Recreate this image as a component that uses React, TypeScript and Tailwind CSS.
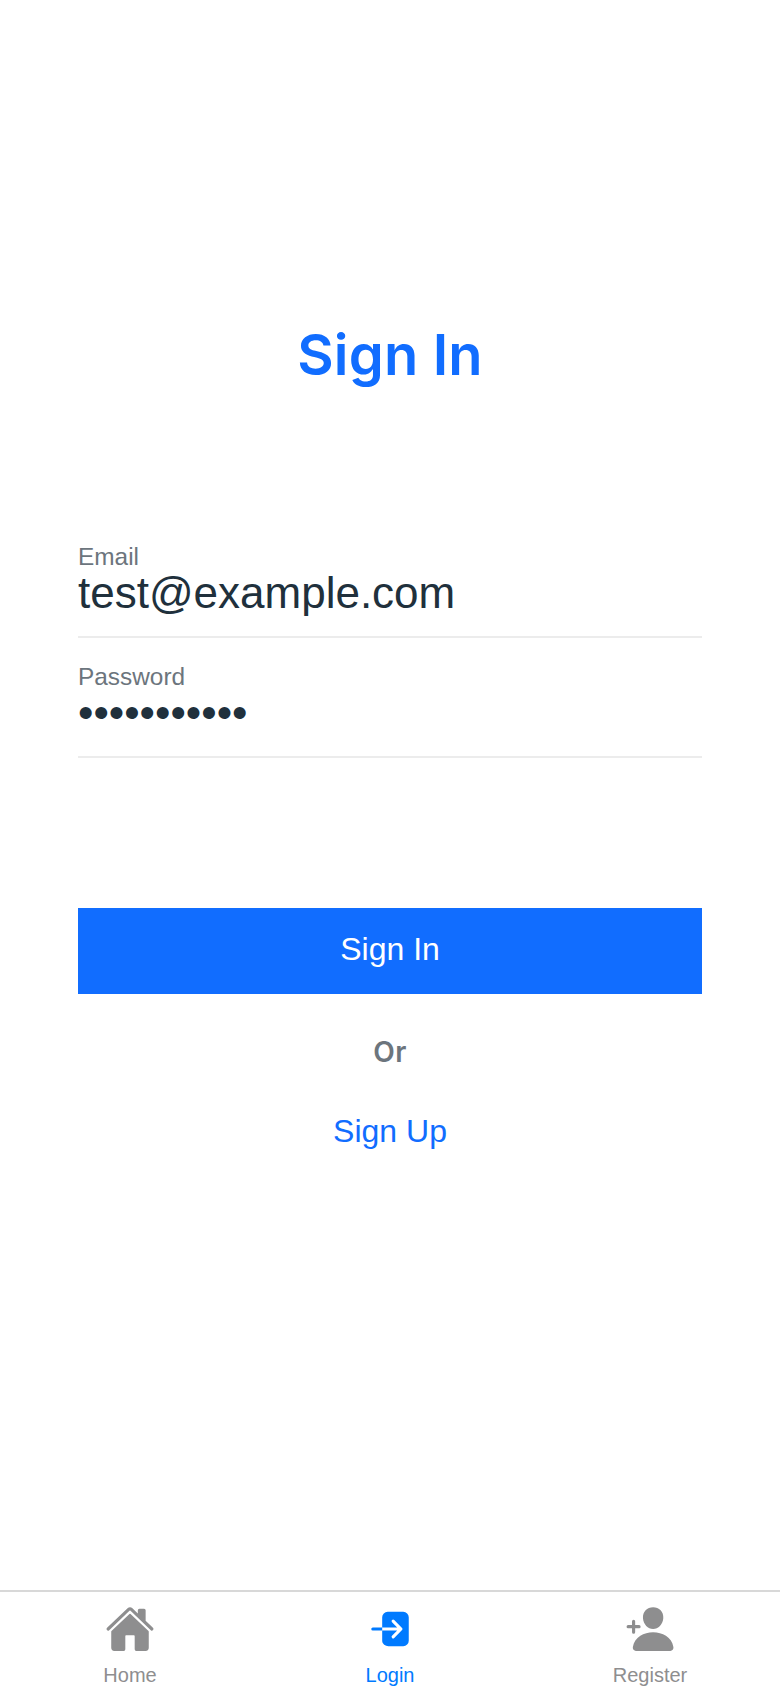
import type { ReactNode } from "react";
import { IoHome, IoLogIn, IoPersonAdd } from "react-icons/io5";

function Field({ label, value, type }: { label: string; value: string; type: string }) {
  return (
    <label className="flex h-[94px] flex-col border-b-2 border-[#ececec]">
      <span className="text-[24.4px] leading-[26px] text-[#6c757d]">{label}</span>
      <input type={type} defaultValue={value} className="h-[46px] w-full bg-transparent p-0 text-[44px] leading-[46px] text-[#20303c] outline-none" />
    </label>
  );
}

function Tab({ icon, label, active = false }: { icon: ReactNode; label: string; active?: boolean }) {
  return (
    <a className={`flex flex-col items-center pt-[12px] ${active ? "text-[#007aff]" : "text-[#8e8e8f]"}`}>
      {icon}
      <span className="mt-[9px] text-[20px] leading-[24px]">{label}</span>
    </a>
  );
}

export default function App() {
  return (
    <main className="flex h-[1688px] w-full flex-col overflow-hidden bg-white font-['Liberation_Sans',sans-serif]">
      <section className="flex flex-1 flex-col px-[78px]">
        <h1 className="mt-[317px] text-center font-['Inter',sans-serif] text-[56px] leading-[76px] font-semibold tracking-[0.2px] text-[#116dff]">Sign In</h1>
        <div className="mt-[151px] flex flex-col gap-[26px]">
          <Field label="Email" value="test@example.com" type="text" />
          <Field label="Password" value="passwordabc" type="password" />
        </div>
        <button className="mt-[150px] h-[86px] bg-[#116dff] pb-[4px] text-[32px] text-white">Sign In</button>
        <p className="mt-[40px] text-center font-['Inter',sans-serif] text-[28px] leading-[36px] font-semibold tracking-[0.5px] text-[#6c757d]">Or</p>
        <a className="mt-[43px] text-center text-[32px] leading-[36px] text-[#116dff]">Sign Up</a>
      </section>
      <nav className="grid h-[98px] grid-cols-3 border-t-2 border-[#d8d8d8]">
        <Tab icon={<IoHome size={50} />} label="Home" />
        <Tab icon={<IoLogIn size={50} />} label="Login" active />
        <Tab icon={<IoPersonAdd size={50} />} label="Register" />
      </nav>
    </main>
  );
}
